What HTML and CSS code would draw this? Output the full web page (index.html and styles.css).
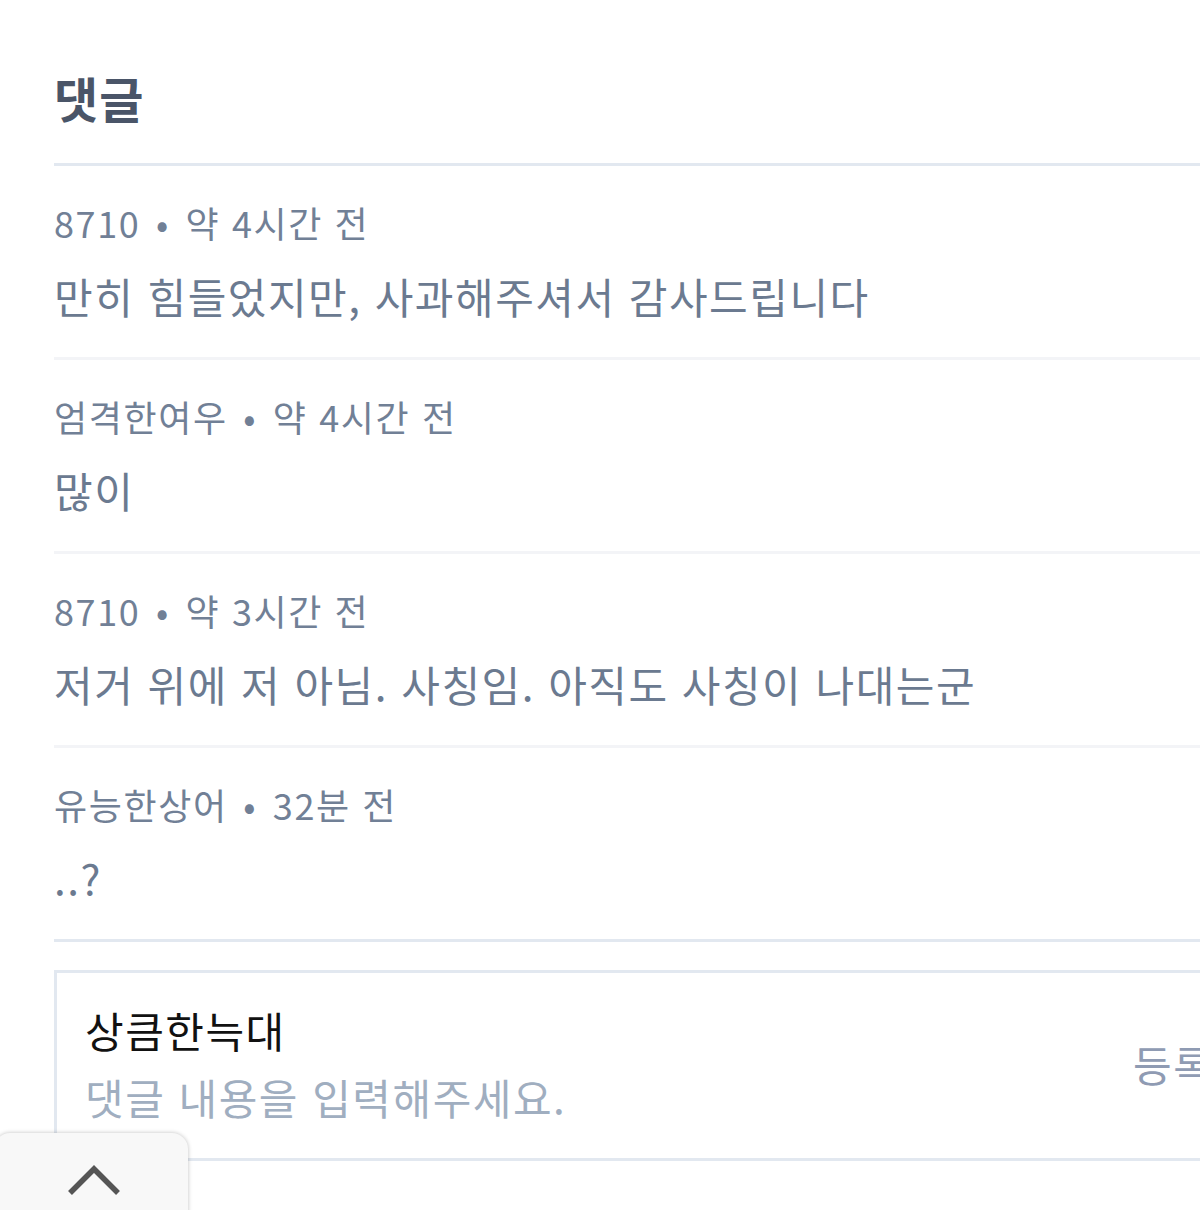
FILE: index.html
```html
<!DOCTYPE html>
<html lang="ko">
<head>
<meta charset="utf-8">
<title>댓글</title>
<link rel="stylesheet" href="styles.css">
</head>
<body>
<div class="page">
  <section class="comments">
    <h2 class="title">댓글</h2>
    <ul class="list">
      <li class="item">
        <div class="meta">8710 <span class="dot">•</span> 약 4시간 전</div>
        <p class="body">만히 힘들었지만, 사과해주셔서 감사드립니다</p>
      </li>
      <li class="item">
        <div class="meta">엄격한여우 <span class="dot">•</span> 약 4시간 전</div>
        <p class="body">많이</p>
      </li>
      <li class="item">
        <div class="meta">8710 <span class="dot">•</span> 약 3시간 전</div>
        <p class="body">저거 위에 저 아님. 사칭임. 아직도 사칭이 나대는군</p>
      </li>
      <li class="item last">
        <div class="meta">유능한상어 <span class="dot">•</span> 32분 전</div>
        <p class="body">..?</p>
      </li>
    </ul>
    <form class="write">
      <div class="write-main">
        <div class="writer">상큼한늑대</div>
        <div class="placeholder">댓글 내용을 입력해주세요.</div>
      </div>
      <button type="button" class="submit">등록</button>
    </form>
  </section>
</div>
<div class="top-tab">
  <svg width="60" height="40" viewBox="0 0 60 40"><polyline points="13,32 37,8 61,32" fill="none" stroke="#555" stroke-width="5.5" stroke-linecap="butt" stroke-linejoin="miter"/></svg>
</div>
</body>
</html>
```

FILE: styles.css
```css
html, body {
  margin: 0;
  padding: 0;
  background: #fff;
  overflow: hidden;
  width: 1200px;
  height: 1210px;
}
body {
  font-family: "Noto Sans CJK KR", "Noto Sans", sans-serif;
}
.page {
  padding: 68px 0 0 54px;
  width: 1200px;
}
.comments {
  display: flex;
  flex-direction: column;
}
.title {
  margin: 0;
  font-size: 48px;
  line-height: 58px;
  font-weight: 700;
  letter-spacing: 1px;
  color: #4a5568;
  padding-bottom: 37px;
  border-bottom: 3px solid #e2e8f0;
}
.list {
  list-style: none;
  margin: 0;
  padding: 0;
}
.item {
  display: flex;
  flex-direction: column;
  gap: 22px;
  padding: 32px 0 33px;
  border-bottom: 3px solid #f3f4f7;
}
.item.last {
  border-bottom-color: #e2e8f0;
}
.meta {
  font-size: 36px;
  line-height: 48px;
  letter-spacing: 1.6px;
  color: #718096;
}
.dot {
  margin: 0 4px;
}
.body {
  margin: 0;
  font-size: 42px;
  line-height: 56px;
  letter-spacing: 1.5px;
  color: #6b7a90;
}
.write {
  margin-top: 28px;
  display: flex;
  align-items: center;
  border: 3px solid #e2e8f0;
  padding: 33px 0 37px 28px;
}
.write-main {
  flex: 1;
  display: flex;
  flex-direction: column;
  gap: 19px;
}
.writer {
  font-size: 42px;
  line-height: 48px;
  letter-spacing: 1.5px;
  color: #111;
}
.placeholder {
  font-size: 42px;
  line-height: 48px;
  letter-spacing: 1.5px;
  color: #a0aec0;
}
.submit {
  font-family: inherit;
  border: 0;
  background: none;
  font-size: 42px;
  line-height: 48px;
  letter-spacing: 1.5px;
  color: #8f9bb3;
  padding: 0;
  margin-right: 28px;
  width: 90px;
  text-align: left;
  white-space: nowrap;
}
.top-tab {
  position: fixed;
  left: -6px;
  bottom: -20px;
  width: 194px;
  height: 97px;
  background: #f8f8f8;
  border-radius: 16px 16px 0 0;
  box-shadow: 0 0 4px rgba(0,0,0,0.25);
  display: flex;
  justify-content: flex-start;
  padding: 28px 0 0 63px;
  box-sizing: border-box;
}
.top-tab svg {
  display: block;
  overflow: visible;
}
```
